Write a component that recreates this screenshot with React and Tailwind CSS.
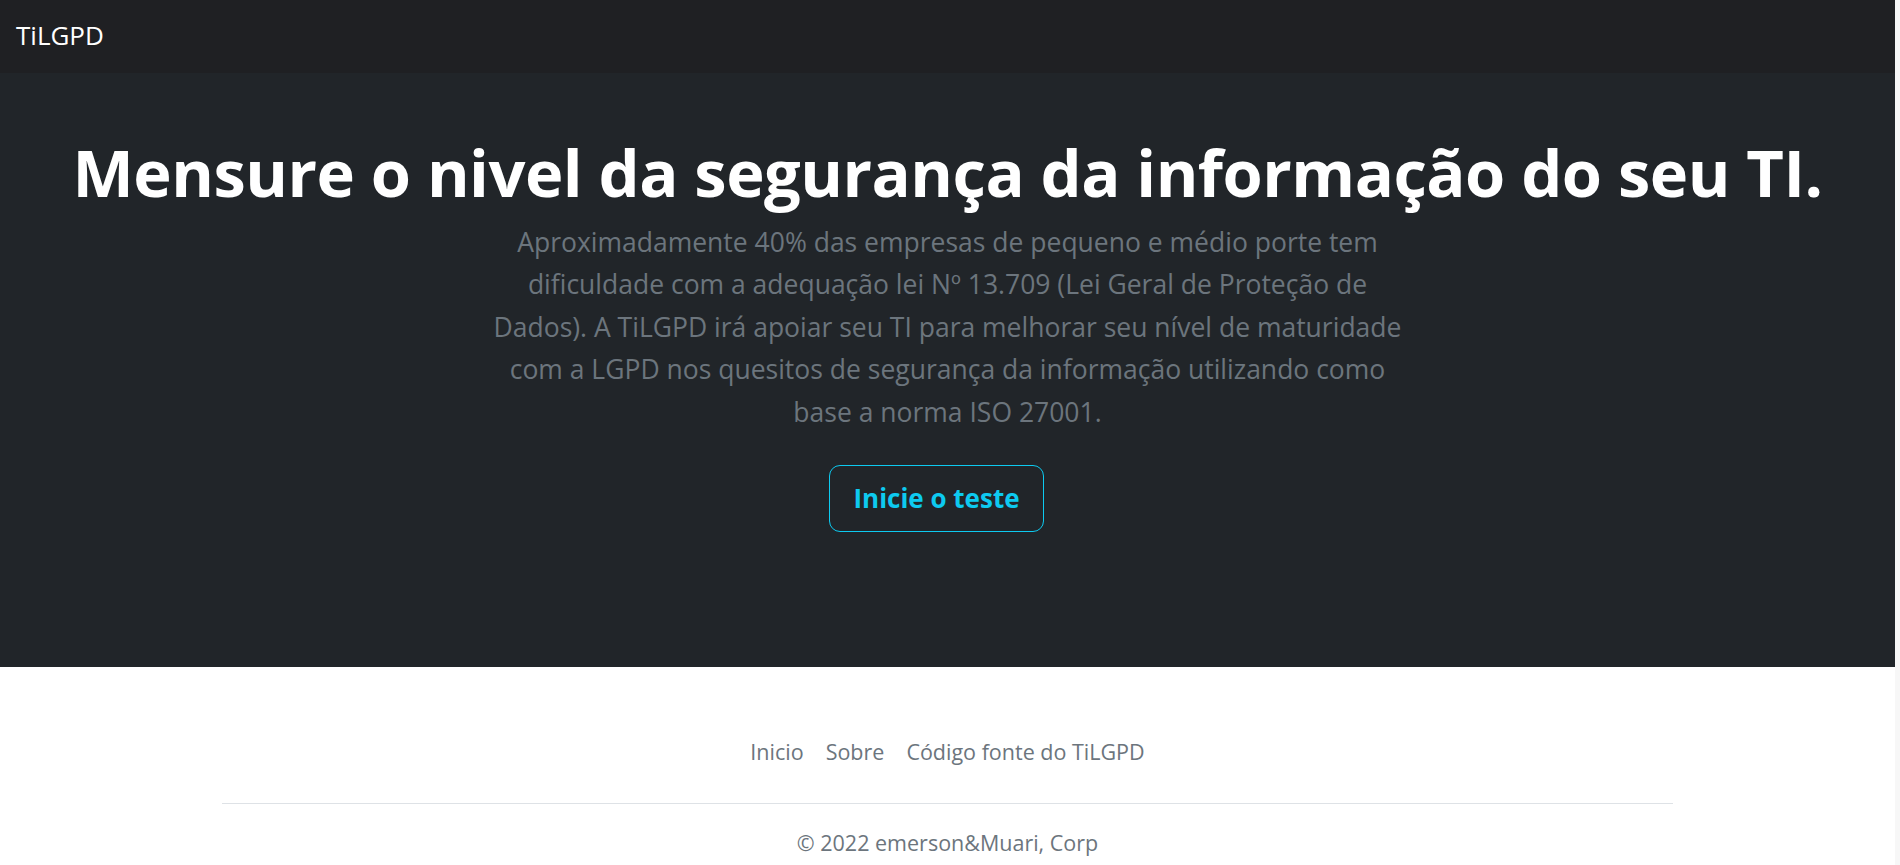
import React from 'react';

const font = { fontFamily: '"Open Sans", "Noto Sans", sans-serif' };

const lines = [
  'Aproximadamente 40% das empresas de pequeno e médio porte tem',
  'dificuldade com a adequação lei Nº 13.709 (Lei Geral de Proteção de',
  'Dados). A TiLGPD irá apoiar seu TI para melhorar seu nível de maturidade',
  'com a LGPD nos quesitos de segurança da informação utilizando como',
  'base a norma ISO 27001.',
];

export default function App() {
  return (
    <div className="flex min-h-screen bg-white" style={font}>
      <div className="flex-1 flex flex-col">
        {/* navbar */}
        <nav className="h-[73px] bg-[#1f2023] flex items-center px-4">
          <span className="text-[26px] text-white leading-none -mt-1">TiLGPD</span>
        </nav>

        {/* hero */}
        <section className="h-[594px] bg-[#212529] flex flex-col items-center text-center pt-[60px]">
          <h1 className="text-[65px] font-bold text-white leading-[1.2] tracking-[-0.5px]">
            Mensure o nivel da segurança da informação do seu TI.
          </h1>
          <p className="mt-[10px] text-[26.5px] leading-[42.4px] text-[#6c757d]">
            {lines.map((l, i) => (
              <span key={i} className="block">{l}</span>
            ))}
          </p>
          <button className="mt-[32px] mr-[22px] h-[67px] px-[23px] border border-[#0dcaf0] rounded-[11px] text-[#0dcaf0] text-[26px] font-bold">
            Inicie o teste
          </button>
        </section>

        {/* footer */}
        <footer className="flex flex-col items-center pt-[70px]">
          <ul className="flex gap-[22px] text-[21.5px] text-[#6c757d] leading-[30px]">
            <li>Inicio</li>
            <li>Sobre</li>
            <li>Código fonte do TiLGPD</li>
          </ul>
          <div className="w-[1451px] border-t border-[#dee2e6] mt-[36px]" />
          <p className="mt-[24px] text-[21.5px] text-[#6c757d] leading-[30px] pb-10">© 2022 emerson&amp;Muari, Corp</p>
        </footer>
      </div>
      <div className="w-[5px] bg-[#f7f7f7]" />
    </div>
  );
}
